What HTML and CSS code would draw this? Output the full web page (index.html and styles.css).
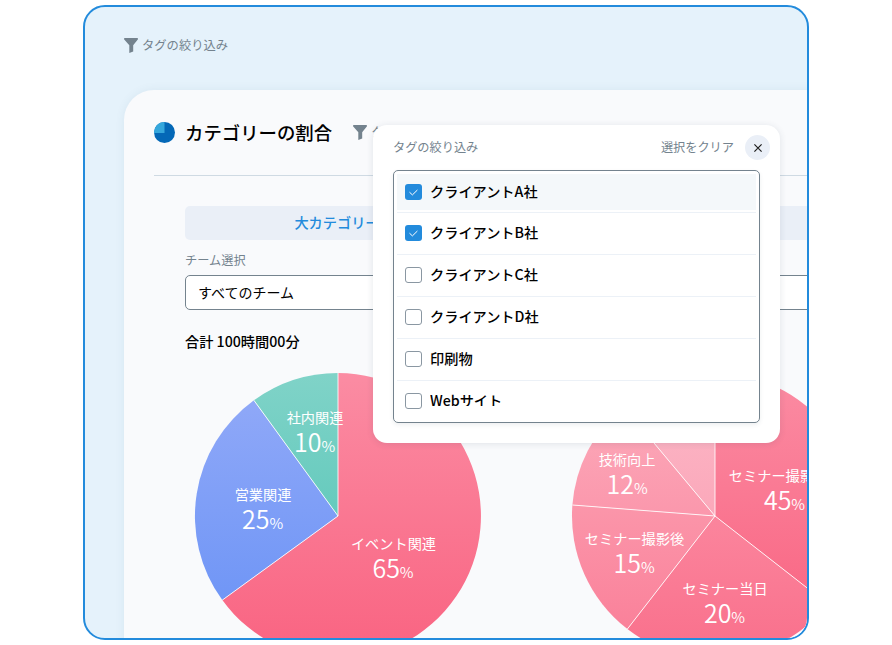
FILE: index.html
```html
<!DOCTYPE html>
<html lang="ja">
  <head>
    <meta charset="utf-8">
    <meta name="viewport" content="width=device-width, initial-scale=1">
    <title>カテゴリーの割合</title>
    <link rel="stylesheet" href="styles.css">
  </head>
  <body>
    <div class="frame">
      <!-- 全体の絞り込み -->
      <div class="filter page-filter">
        <svg class="funnel" viewBox="0 0 14 15"><path d="M.3 0h13.4L14 1.2 9.2 7.2v6.3L5.3 15V7.2L0 1.2z"/></svg>
        <span>タグの絞り込み</span>
      </div>

      <section class="card">
        <header class="card-header">
          <svg class="pie-icon" viewBox="0 0 21 21">
            <circle cx="10.5" cy="10.5" r="10.5" fill="#0468b7"/>
            <path d="M10.5 11H0A10.5 10.5 0 0 1 10.5 0z" fill="#35a7dc"/>
          </svg>
          <h1>カテゴリーの割合</h1>
          <div class="filter">
            <svg class="funnel" viewBox="0 0 14 15"><path d="M.3 0h13.4L14 1.2 9.2 7.2v6.3L5.3 15V7.2L0 1.2z"/></svg>
            <span>タグの絞り込み</span>
          </div>
        </header>

        <div class="card-body">
          <div class="tabs"><span class="tab">大カテゴリー</span></div>
          <div class="label">チーム選択</div>
          <div class="select">すべてのチーム</div>
          <p class="total">合計 100時間00分</p>

          <!-- 円グラフ -->
          <div class="charts">
            <svg class="chart" viewBox="-143 -143 286 286">
              <defs>
                <linearGradient id="pink" gradientUnits="userSpaceOnUse" x1="0" y1="-143" x2="0" y2="143">
                  <stop offset="0" stop-color="#fb8ca3"/><stop offset="1" stop-color="#f96381"/>
                </linearGradient>
                <linearGradient id="blue" x1="0" y1="0" x2="0" y2="1">
                  <stop offset="0" stop-color="#8fa8f8"/><stop offset="1" stop-color="#7096f6"/>
                </linearGradient>
                <linearGradient id="green" x1="0" y1="0" x2="0" y2="1">
                  <stop offset="0" stop-color="#80d3c8"/><stop offset="1" stop-color="#65cabd"/>
                </linearGradient>
              </defs>
              <path fill="url(#pink)" d="M0 0V-143A143 143 0 1 1 -115.7 84.1z"/>
              <path fill="url(#blue)" d="M0 0L-115.7 84.1A143 143 0 0 1 -84.1 -115.7z"/>
              <path fill="url(#green)" d="M0 0L-84.1 -115.7A143 143 0 0 1 0 -143z"/>
              <path class="line" d="M0 -143V0L-115.7 84.1M0 0L-84.1 -115.7"/>
              <text x="-23" y="-93">社内関連</text>
              <text class="num" x="-23.5" y="-64">10<tspan>%</tspan></text>
              <text x="-75" y="-16">営業関連</text>
              <text class="num" x="-75.5" y="13">25<tspan>%</tspan></text>
              <text x="55.5" y="33">イベント関連</text>
              <text class="num" x="55" y="62">65<tspan>%</tspan></text>
            </svg>

            <svg class="chart" viewBox="-143 -143 286 286">
              <defs>
                <linearGradient id="p1" x1="0" y1="0" x2="0" y2="1">
                  <stop offset="0" stop-color="#fb8ca3"/><stop offset="1" stop-color="#f96885"/>
                </linearGradient>
                <linearGradient id="p2" x1="0" y1="0" x2="0" y2="1">
                  <stop offset="0" stop-color="#fb859d"/><stop offset="1" stop-color="#f96f8b"/>
                </linearGradient>
                <linearGradient id="p3" x1="0" y1="0" x2="0" y2="1">
                  <stop offset="0" stop-color="#fb96aa"/><stop offset="1" stop-color="#fa819a"/>
                </linearGradient>
                <linearGradient id="p4" x1="0" y1="0" x2="0" y2="1">
                  <stop offset="0" stop-color="#fca9b9"/><stop offset="1" stop-color="#fb97ac"/>
                </linearGradient>
                <linearGradient id="p5" x1="0" y1="0" x2="0" y2="1">
                  <stop offset="0" stop-color="#fcb9c8"/><stop offset="1" stop-color="#fba8ba"/>
                </linearGradient>
              </defs>
              <path fill="url(#p1)" d="M0 0V-143A143 143 0 0 1 112.7 88z"/>
              <path fill="url(#p2)" d="M0 0L112.7 88A143 143 0 0 1 -87.6 113z"/>
              <path fill="url(#p3)" d="M0 0L-87.6 113A143 143 0 0 1 -142.6 -11z"/>
              <path fill="url(#p4)" d="M0 0L-142.6 -11A143 143 0 0 1 -91.7 -109.7z"/>
              <path fill="url(#p5)" d="M0 0L-91.7 -109.7A143 143 0 0 1 0 -143z"/>
              <path class="line" d="M0 -143V0L112.7 88M-87.6 113L0 0L-142.6 -11M0 0L-91.7 -109.7"/>
              <text x="-88" y="-51">技術向上</text>
              <text class="num" x="-88" y="-22">12<tspan>%</tspan></text>
              <text x="-80.5" y="28">セミナー撮影後</text>
              <text class="num" x="-81" y="57">15<tspan>%</tspan></text>
              <text x="10" y="78">セミナー当日</text>
              <text class="num" x="9.5" y="107">20<tspan>%</tspan></text>
              <text x="63.5" y="-35">セミナー撮影前</text>
              <text class="num" x="69.5" y="-6">45<tspan>%</tspan></text>
            </svg>
          </div>
        </div>
      </section>

      <!-- タグ選択のポップアップ -->
      <div class="popup">
        <div class="popup-header">
          <span>タグの絞り込み</span>
          <span class="clear">選択をクリア</span>
          <span class="close"><svg viewBox="0 0 8 8"><path d="M.4 .4l7.2 7.2M7.6 .4L.4 7.6"/></svg></span>
        </div>
        <ul class="tag-list">
          <li class="active"><i class="check on"><svg viewBox="0 0 16 16"><path d="M4 8.2l2.9 2.7 5-4.9"/></svg></i><span>クライアントA社</span></li>
          <li><i class="check on"><svg viewBox="0 0 16 16"><path d="M4 8.2l2.9 2.7 5-4.9"/></svg></i><span>クライアントB社</span></li>
          <li><i class="check"></i><span>クライアントC社</span></li>
          <li><i class="check"></i><span>クライアントD社</span></li>
          <li><i class="check"></i><span>印刷物</span></li>
          <li><i class="check"></i><span class="cut">Webサイト</span></li>
        </ul>
      </div>
    </div>
  </body>
</html>
```

FILE: styles.css
```css
* {
  box-sizing: border-box;
}
body {
  margin: 0;
  padding: 5px 0 0 83px;
  height: 645px;
  overflow: hidden;
  background: #fff;
  color: #000;
  font-family: "Noto Sans CJK JP", sans-serif;
  font-size: 14.2px;
}
.frame {
  position: relative;
  width: 725.5px;
  height: 635px;
  padding: 30px 0 0 39px;
  border: 2px solid #238bdc;
  border-radius: 22px;
  overflow: hidden;
  background: #e5f2fb;
}
/* -------- 絞り込み ------------- */
.filter {
  display: flex;
  align-items: center;
  gap: 4px;
  height: 18px;
  color: #74838e;
  font-size: 12.3px;
  line-height: 18px;
  white-space: nowrap;
}
.filter span {
  padding-bottom: 2px;
}
.page-filter {
  height: 17px;
  margin-bottom: 36px;
}
.funnel {
  width: 14px;
  height: 15px;
  fill: #74838e;
}
/* -------- カード ------------- */
.card {
  width: 900px;
  height: 700px;
  padding: 0 30px;
  border-radius: 30px;
  background: #f9fafc;
  box-shadow: 0 0 10px rgba(60, 100, 130, .08);
}
.card-header {
  display: flex;
  align-items: center;
  height: 86px;
  border-bottom: 1px solid #cfdae3;
}
.pie-icon {
  width: 21px;
  height: 21px;
}
.card-header h1 {
  margin: 0 21px 0 10px;
  padding-bottom: 2px;
  font-size: 18.4px;
  font-weight: 500;
  line-height: 24px;
}
.card-body {
  padding: 30px 0 0 31px;
}
.tabs {
  width: 760px;
  height: 34px;
  border-radius: 5px;
  background: #eaeff7;
}
.tab {
  display: block;
  width: 304px;
  color: #238bdc;
  font-weight: 500;
  line-height: 32px;
  text-align: center;
}
.label {
  height: 35px;
  padding-top: 11px;
  color: #74838e;
  font-size: 12.2px;
  line-height: 18px;
}
.select {
  width: 760px;
  height: 35px;
  padding-left: 12px;
  border: 1px solid #74838e;
  border-radius: 5px;
  background: #fff;
  font-size: 14px;
  line-height: 32px;
}
.total {
  margin: 21px 0;
  font-weight: 500;
  line-height: 21px;
}
/* -------- 円グラフ ------------- */
.charts {
  display: flex;
  gap: 91px;
  padding-left: 10px;
}
.chart {
  flex: none;
  width: 286px;
  height: 286px;
  overflow: visible;
}
.chart .line {
  fill: none;
  stroke: #fff;
  stroke-opacity: .85;
}
.chart text {
  fill: #fff;
  font-size: 14.2px;
  text-anchor: middle;
}
.chart .num {
  font-size: 25px;
  font-weight: 350;
}
.chart tspan {
  font-size: 15px;
}
/* -------- ポップアップ ------------- */
.popup {
  position: absolute;
  top: 118px;
  left: 288px;
  width: 407px;
  height: 318px;
  padding: 0 20px;
  border-radius: 14px;
  background: #fff;
  box-shadow: 0 1px 7px rgba(40, 60, 80, .12);
}
.popup-header {
  display: flex;
  align-items: center;
  height: 45px;
  margin-right: -10px;
  color: #74838e;
  font-size: 12.2px;
}
.popup-header > span:not(.close) {
  padding-bottom: 2px;
}
.clear {
  margin: 0 11px 0 auto;
}
.close {
  display: flex;
  align-items: center;
  justify-content: center;
  width: 25px;
  height: 25px;
  border-radius: 50%;
  background: #eaeff7;
}
.close svg {
  width: 8px;
  height: 8px;
  overflow: visible;
  stroke: #222;
  stroke-width: 1.2;
}
.tag-list {
  height: 253px;
  margin: 0;
  padding: 3px;
  border: 1px solid #74838e;
  border-radius: 5px;
  box-shadow: 0 2px 4px rgba(40, 60, 80, .08);
  list-style: none;
}
.tag-list li {
  display: flex;
  align-items: center;
  gap: 8px;
  height: 42px;
  padding: 0 0 2px 8px;
  border-bottom: 1px solid #ecf1f7;
  font-weight: 500;
}
.tag-list li.active {
  height: 39px;
  padding-bottom: 3px;
  background: linear-gradient(#f4f8fa, #f4f8fa) 0 0 / 100% 36px no-repeat;
}
.tag-list li:last-child {
  border-bottom: none;
  padding-bottom: 3px;
}
.tag-list span {
  line-height: 21px;
}
.tag-list .cut {
  height: 16px;
  margin-bottom: 5px;
  overflow: hidden;
}
.check {
  width: 17px;
  height: 16px;
  border: 1px solid #8a97a2;
  border-radius: 3px;
}
.check.on {
  border: none;
  background: #238bdc;
}
.check svg {
  display: block;
  width: 17px;
  height: 16px;
  fill: none;
  stroke: #fff;
}
```
